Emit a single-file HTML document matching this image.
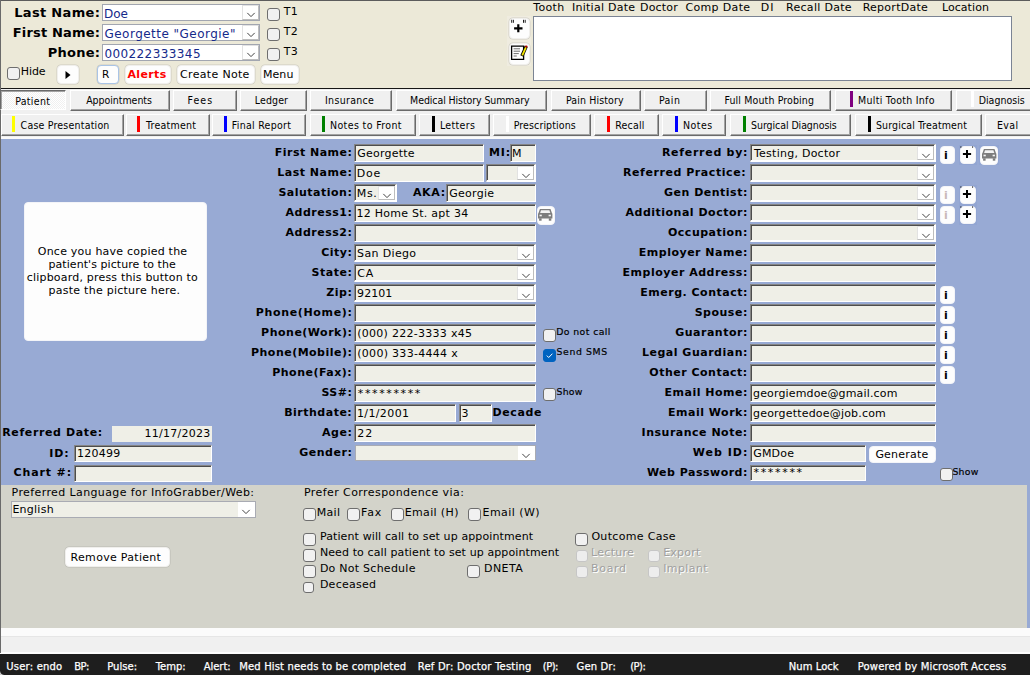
<!DOCTYPE html>
<html lang="en">
<head>
<meta charset="utf-8">
<title>Patient</title>
<style>
html,body{margin:0;padding:0}
body{width:1030px;height:675px;overflow:hidden;background:#f0f0f0;font-family:'DejaVu Sans','Liberation Sans',sans-serif;font-size:11.5px;color:#000}
#app{position:relative;width:1030px;height:675px;overflow:hidden}
#app div,#app span,#app svg{position:absolute;box-sizing:border-box}
.t{white-space:pre;line-height:1;font-family:'DejaVu Sans','Liberation Sans',sans-serif}
.c{font-family:'DejaVu Sans Condensed','Liberation Sans',sans-serif}
.f{background:#efefe7;border:1px solid;border-color:#858585 #fff #fff #858585;box-shadow:inset 1px 1px 0 #4d4d4d;overflow:hidden}
.cmb{border-right-width:2px;border-bottom-width:2px}
.flat{background:#efefe7;border:1px solid #a9abb3}
.ddf{background:#fff}
.ddf svg{left:3px;top:7px}
.hc{background:#fff;border:1px solid #a2a6b0;overflow:hidden}
.dd{background:#fff;border:1px solid;border-color:#e2e2e2 #bdbdbd #bdbdbd #e2e2e2}
.dd svg{left:3px;top:6px}
.cb{width:13px;height:13px;border:1px solid #6e6e6e;border-radius:3px;background:#f1f1f1}
.cbd{width:12px;height:12px;border:1px solid #c6c6c6;border-radius:3px;background:#ededed}
.cbs{width:11px;height:11px}
.cbk{background:#0063c0;border-color:#0063c0}
.b{background:#fdfdfd;border:1px solid #f0efec;border-radius:4px;box-shadow:0 0 0 0.5px rgba(120,120,120,.25)}
.bb{border-color:#f3f4f8;box-shadow:none}
.tab{background:#f0f0f0;border:1px solid;border-color:#fff #6a6a6a #6a6a6a #fff;box-shadow:inset -1px -1px 0 #a3a3a3}
.tabp{border-color:#6a6a6a #fff #fff #6a6a6a;box-shadow:inset 1px 1px 0 #a3a3a3;background:repeating-conic-gradient(#ffffff 0% 25%,#f0f0f0 0% 50%) 0 0/2px 2px}
.dis{color:#a0a0a0;text-shadow:1px 1px 0 #fff}
.sm{-webkit-text-stroke:0.18px #000}
.st{-webkit-text-stroke:0.25px #fff}
</style>
</head>
<body>
<div id="app">
<div style="left:0px;top:0px;width:1030px;height:88px;background:#ece9d8"></div>
<div style="left:0px;top:0px;width:1030px;height:1px;background:#5c5c5c"></div>
<div style="left:0px;top:88px;width:1030px;height:1px;background:#161616"></div>
<div style="left:0px;top:89px;width:1030px;height:50px;background:#f0f0f0"></div>
<div style="left:0px;top:137px;width:1030px;height:2px;background:#fafafa"></div>
<div style="left:0px;top:139px;width:1030px;height:489px;background:#98aad4"></div>
<div style="left:1px;top:485px;width:1026px;height:143px;background:#d3d3ca"></div>
<div style="left:0px;top:628px;width:1030px;height:8px;background:#fbfbfb"></div>
<div style="left:0px;top:636px;width:1030px;height:1px;background:#e6e6e6"></div>
<div style="left:0px;top:637px;width:1030px;height:15px;background:#f0f0f0"></div>
<div style="left:0px;top:652px;width:1030px;height:2px;background:#fdfdfd"></div>
<div style="left:0px;top:654px;width:1030px;height:21px;background:#1e1e1e"></div>
<div style="left:0px;top:0px;width:1px;height:653px;background:#6a6a6a"></div>
<div style="left:0px;top:671px;width:4px;height:4px;background:radial-gradient(circle at 100% 0,#1e1e1e 3.4px,#c8c8c8 4.2px)"></div>
<div class="hc" style="left:102px;top:4px;width:158px;height:17px;"></div>
<div style="left:102px;top:20px;width:158px;height:1px;background:#a2a6b0"></div>
<div style="left:102px;top:21px;width:158px;height:3px;background:#ece9d8"></div>
<div class="dd" style="left:242px;top:5px;width:17px;height:15px;"><svg width="10" height="6" viewBox="0 0 10 6"><path d="M1.3 0.9 L5 4.6 L8.7 0.9" fill="none" stroke="#444" stroke-width="1"/></svg></div>
<div class="cb" style="left:267px;top:8px;width:13px;height:13px;"></div>
<div class="hc" style="left:102px;top:24px;width:158px;height:17px;"></div>
<div style="left:102px;top:40px;width:158px;height:1px;background:#a2a6b0"></div>
<div style="left:102px;top:41px;width:158px;height:3px;background:#ece9d8"></div>
<div class="dd" style="left:242px;top:25px;width:17px;height:15px;"><svg width="10" height="6" viewBox="0 0 10 6"><path d="M1.3 0.9 L5 4.6 L8.7 0.9" fill="none" stroke="#444" stroke-width="1"/></svg></div>
<div class="cb" style="left:267px;top:28px;width:13px;height:13px;"></div>
<div class="hc" style="left:102px;top:44px;width:158px;height:17px;"></div>
<div style="left:102px;top:60px;width:158px;height:1px;background:#a2a6b0"></div>
<div style="left:102px;top:61px;width:158px;height:3px;background:#ece9d8"></div>
<div class="dd" style="left:242px;top:45px;width:17px;height:15px;"><svg width="10" height="6" viewBox="0 0 10 6"><path d="M1.3 0.9 L5 4.6 L8.7 0.9" fill="none" stroke="#444" stroke-width="1"/></svg></div>
<div class="cb" style="left:267px;top:48px;width:13px;height:13px;"></div>
<div class="cb" style="left:7px;top:67px;width:13px;height:13px;"></div>
<div class="b" style="left:56.5px;top:65px;width:22px;height:19px;"><svg width="6" height="8" viewBox="0 0 6 8" style="left:7px;top:5px"><path d="M0.5 0 L5.5 4 L0.5 8 Z" fill="#000"/></svg></div>
<div class="b" style="left:96.5px;top:65px;width:22px;height:19px;border-color:#a9c4e6"></div>
<div class="b" style="left:124.5px;top:65px;width:46px;height:19px;"></div>
<div class="b" style="left:177px;top:65px;width:77.5px;height:19px;"></div>
<div class="b" style="left:260.5px;top:65px;width:38px;height:19px;"></div>
<div style="left:533px;top:16px;width:479px;height:64.5px;background:#fff;border:1px solid #7b8494"></div>
<div style="left:507px;top:16px;width:24px;height:49.5px;background:#efece0"></div>
<div class="b" style="left:509px;top:17.5px;width:21px;height:21.5px;"></div>
<svg style="left:509px;top:17px" width="22" height="23" viewBox="509 17 22 23"><path d="M514.1 28.3h8.4M518.3 24.3v8" stroke="#000" stroke-width="2.2" fill="none"/><path d="M511.7 19.8v3M513.4 19.8v3M523.5 19.8v3M525.2 19.8v3" stroke="#000" stroke-width="0.9"/></svg>
<div class="b" style="left:509px;top:43px;width:21px;height:21.5px;"></div>
<svg style="left:509px;top:43px" width="22" height="22" viewBox="509 43 22 22"><path d="M511.6 46.2h12v13.2h-12z" fill="#fff" stroke="#000" stroke-width="1.3"/><path d="M513.6 48.8h6.4M513.6 51.2h6.4M513.6 53.6h5.2M513.6 56h3.2" stroke="#606060" stroke-width="0.9"/><path d="M526.2 46.4l-4.3 9.6" stroke="#000" stroke-width="3.4"/><path d="M525.9 47.4l-3.6 8" stroke="#f6e600" stroke-width="1.8"/><path d="M525.3 46l2 0.9" stroke="#b00000" stroke-width="1.8"/></svg>
<div class="tab tabp" style="left:0px;top:90px;width:66px;height:20px;"></div>
<div class="tab" style="left:70px;top:90px;width:100px;height:21px;"></div>
<div class="tab" style="left:173px;top:90px;width:64px;height:21px;"></div>
<div class="tab" style="left:240px;top:90px;width:66.5px;height:21px;"></div>
<div class="tab" style="left:310px;top:90px;width:81.5px;height:21px;"></div>
<div class="tab" style="left:395.5px;top:90px;width:151.5px;height:21px;"></div>
<div class="tab" style="left:551px;top:90px;width:89.5px;height:21px;"></div>
<div class="tab" style="left:644px;top:90px;width:63px;height:21px;"></div>
<div class="tab" style="left:710px;top:90px;width:121px;height:21px;"></div>
<div class="tab" style="left:834.5px;top:90px;width:117px;height:21px;"></div>
<div style="left:850px;top:91px;width:3.2px;height:16px;background:#800080"></div>
<div class="tab" style="left:955.5px;top:90px;width:84.5px;height:21px;"></div>
<div style="left:970.8px;top:91px;width:3.2px;height:16px;background:#fff"></div>
<div class="tab" style="left:1px;top:114px;width:123px;height:22px;"></div>
<div style="left:12px;top:116px;width:3.2px;height:16px;background:#ffff00"></div>
<div class="tab" style="left:126px;top:114px;width:84px;height:22px;"></div>
<div style="left:137px;top:116px;width:3.2px;height:16px;background:#ff0000"></div>
<div class="tab" style="left:212px;top:114px;width:94px;height:22px;"></div>
<div style="left:224px;top:116px;width:3.2px;height:16px;background:#0000ff"></div>
<div class="tab" style="left:310px;top:114px;width:106px;height:22px;"></div>
<div style="left:321.8px;top:116px;width:3.2px;height:16px;background:#008000"></div>
<div class="tab" style="left:419px;top:114px;width:71px;height:22px;"></div>
<div style="left:431.6px;top:116px;width:3.2px;height:16px;background:#000"></div>
<div class="tab" style="left:493px;top:114px;width:98px;height:22px;"></div>
<div style="left:506px;top:116px;width:3.2px;height:16px;background:#fff"></div>
<div class="tab" style="left:594px;top:114px;width:65px;height:22px;"></div>
<div style="left:607px;top:116px;width:3.2px;height:16px;background:#ff0000"></div>
<div class="tab" style="left:662px;top:114px;width:64px;height:22px;"></div>
<div style="left:675px;top:116px;width:3.2px;height:16px;background:#0000ff"></div>
<div class="tab" style="left:730px;top:114px;width:121px;height:22px;"></div>
<div style="left:742.6px;top:116px;width:3.2px;height:16px;background:#008000"></div>
<div class="tab" style="left:855px;top:114px;width:127px;height:22px;"></div>
<div style="left:867.6px;top:116px;width:3.2px;height:16px;background:#000"></div>
<div class="tab" style="left:985px;top:114px;width:55px;height:22px;"></div>
<div class="f" style="left:354px;top:144px;width:130px;height:18px;"></div>
<div class="f" style="left:510px;top:144px;width:26px;height:18px;"></div>
<div class="f" style="left:354px;top:164px;width:130px;height:18px;"></div>
<div class="f cmb" style="left:486px;top:164px;width:50px;height:18px;"></div>
<div class="dd" style="left:517px;top:166px;width:17px;height:14px;"><svg width="10" height="6" viewBox="0 0 10 6"><path d="M1.3 0.9 L5 4.6 L8.7 0.9" fill="none" stroke="#444" stroke-width="1"/></svg></div>
<div class="f cmb" style="left:354px;top:184px;width:43px;height:18px;"></div>
<div class="dd" style="left:378px;top:186px;width:17px;height:14px;"><svg width="10" height="6" viewBox="0 0 10 6"><path d="M1.3 0.9 L5 4.6 L8.7 0.9" fill="none" stroke="#444" stroke-width="1"/></svg></div>
<div class="f" style="left:446px;top:184px;width:90px;height:18px;"></div>
<div class="f" style="left:354px;top:204px;width:182px;height:18px;"></div>
<div class="f" style="left:354px;top:224px;width:182px;height:18px;"></div>
<div class="f cmb" style="left:354px;top:244px;width:182px;height:18px;"></div>
<div class="dd" style="left:517px;top:246px;width:17px;height:14px;"><svg width="10" height="6" viewBox="0 0 10 6"><path d="M1.3 0.9 L5 4.6 L8.7 0.9" fill="none" stroke="#444" stroke-width="1"/></svg></div>
<div class="f cmb" style="left:354px;top:264px;width:182px;height:18px;"></div>
<div class="dd" style="left:517px;top:266px;width:17px;height:14px;"><svg width="10" height="6" viewBox="0 0 10 6"><path d="M1.3 0.9 L5 4.6 L8.7 0.9" fill="none" stroke="#444" stroke-width="1"/></svg></div>
<div class="f cmb" style="left:354px;top:284px;width:182px;height:18px;"></div>
<div class="dd" style="left:517px;top:286px;width:17px;height:14px;"><svg width="10" height="6" viewBox="0 0 10 6"><path d="M1.3 0.9 L5 4.6 L8.7 0.9" fill="none" stroke="#444" stroke-width="1"/></svg></div>
<div class="f" style="left:354px;top:304px;width:182px;height:18px;"></div>
<div class="f" style="left:354px;top:324px;width:182px;height:18px;"></div>
<div class="f" style="left:354px;top:344px;width:182px;height:18px;"></div>
<div class="f" style="left:354px;top:364px;width:182px;height:18px;"></div>
<div class="f" style="left:354px;top:384px;width:182px;height:18px;"></div>
<div class="f" style="left:354px;top:404px;width:102px;height:18px;"></div>
<div class="f" style="left:458.5px;top:404px;width:33.5px;height:18px;"></div>
<div class="f" style="left:354px;top:424px;width:182px;height:18px;"></div>
<div class="flat" style="left:355px;top:445px;width:181px;height:16px;"></div>
<div class="ddf" style="left:518px;top:446px;width:17px;height:14px;"><svg width="10" height="6" viewBox="0 0 10 6"><path d="M1.3 0.9 L5 4.6 L8.7 0.9" fill="none" stroke="#444" stroke-width="1"/></svg></div>
<div class="b bb" style="left:536.5px;top:206px;width:18px;height:18.5px;"></div>
<svg style="left:536.6px;top:208px" width="17" height="14" viewBox="536.6 208 17 14"><g transform="translate(537.6 209)"><path d="M1.9 0h10.6l1.5 4.3q0.4 0.1 0.4 0.6v4.6h-14.4v-4.6q0-0.5 0.4-0.6z" fill="#7d7d7d"/><path d="M3 1.2h8.4l0.9 2.9h-10.2z" fill="#f4f4f4"/><rect x="1.1" y="9.3" width="2.5" height="2.4" fill="#7d7d7d"/><rect x="10.8" y="9.3" width="2.5" height="2.4" fill="#7d7d7d"/><rect x="1.5" y="5.7" width="2.3" height="1.6" fill="#f4f4f4"/><rect x="10.6" y="5.7" width="2.3" height="1.6" fill="#f4f4f4"/></g></svg>
<div class="cb" style="left:543px;top:329px;width:13px;height:13px;"></div>
<div class="cb cbk" style="left:543px;top:349px;width:13px;height:13px;"><svg width="11" height="11" viewBox="0 0 11 11" style="left:0;top:0"><path d="M2.8 5.6 L4.7 7.5 L8.4 3.7" fill="none" stroke="#fff" stroke-width="1"/></svg></div>
<div class="cb" style="left:543px;top:388px;width:13px;height:13px;"></div>
<div class="b bb" style="left:24px;top:202px;width:183px;height:138.5px;"></div>
<div style="left:112px;top:426px;width:100px;height:15.5px;background:#efefe7"></div>
<div class="f" style="left:74px;top:445px;width:138px;height:17px;"></div>
<div class="f" style="left:74px;top:465px;width:138px;height:17px;"></div>
<div class="f cmb" style="left:750px;top:144px;width:186px;height:18px;"></div>
<div class="dd" style="left:917px;top:146px;width:17px;height:14px;"><svg width="10" height="6" viewBox="0 0 10 6"><path d="M1.3 0.9 L5 4.6 L8.7 0.9" fill="none" stroke="#444" stroke-width="1"/></svg></div>
<div class="f cmb" style="left:750px;top:164px;width:186px;height:18px;"></div>
<div class="dd" style="left:917px;top:166px;width:17px;height:14px;"><svg width="10" height="6" viewBox="0 0 10 6"><path d="M1.3 0.9 L5 4.6 L8.7 0.9" fill="none" stroke="#444" stroke-width="1"/></svg></div>
<div class="f cmb" style="left:750px;top:184px;width:186px;height:18px;"></div>
<div class="dd" style="left:917px;top:186px;width:17px;height:14px;"><svg width="10" height="6" viewBox="0 0 10 6"><path d="M1.3 0.9 L5 4.6 L8.7 0.9" fill="none" stroke="#444" stroke-width="1"/></svg></div>
<div class="f cmb" style="left:750px;top:204px;width:186px;height:18px;"></div>
<div class="dd" style="left:917px;top:206px;width:17px;height:14px;"><svg width="10" height="6" viewBox="0 0 10 6"><path d="M1.3 0.9 L5 4.6 L8.7 0.9" fill="none" stroke="#444" stroke-width="1"/></svg></div>
<div class="f cmb" style="left:750px;top:224px;width:186px;height:18px;"></div>
<div class="dd" style="left:917px;top:226px;width:17px;height:14px;"><svg width="10" height="6" viewBox="0 0 10 6"><path d="M1.3 0.9 L5 4.6 L8.7 0.9" fill="none" stroke="#444" stroke-width="1"/></svg></div>
<div class="f" style="left:750px;top:244px;width:186px;height:18px;"></div>
<div class="f" style="left:750px;top:264px;width:186px;height:18px;"></div>
<div class="f" style="left:750px;top:284px;width:186px;height:18px;"></div>
<div class="f" style="left:750px;top:304px;width:186px;height:18px;"></div>
<div class="f" style="left:750px;top:324px;width:186px;height:18px;"></div>
<div class="f" style="left:750px;top:344px;width:186px;height:18px;"></div>
<div class="f" style="left:750px;top:364px;width:186px;height:18px;"></div>
<div class="f" style="left:750px;top:384px;width:186px;height:18px;"></div>
<div class="f" style="left:750px;top:404px;width:186px;height:18px;"></div>
<div class="f" style="left:750px;top:424px;width:186px;height:18px;"></div>
<div class="f" style="left:750px;top:445px;width:116px;height:17px;"></div>
<div class="f" style="left:750px;top:464.5px;width:116px;height:16.5px;"></div>
<div class="b bb" style="left:869px;top:445.5px;width:67px;height:17px;"></div>
<div class="cb" style="left:939.5px;top:468px;width:13px;height:13px;"></div>
<div class="b bb" style="left:940px;top:146px;width:14.5px;height:17.5px;"></div>
<div style="left:959px;top:145px;width:18px;height:20px;background:#92a5d2"></div>
<div class="b bb" style="left:959.5px;top:146px;width:16.5px;height:18px;"></div>
<svg style="left:958.3px;top:145px" width="18" height="18" viewBox="958.3 145 18 18"><path d="M963.2 154h8.2M967.3 149.9v8.2" stroke="#000" stroke-width="2" fill="none"/><path d="M961.2 146.4v1.3M972.9 146.4v1.3" stroke="#000" stroke-width="0.9"/></svg>
<div style="left:979px;top:145px;width:20px;height:20px;background:#92a5d2"></div>
<div class="b bb" style="left:980px;top:146px;width:18px;height:18.5px;"></div>
<svg style="left:980.6px;top:148px" width="17" height="14" viewBox="980.6 148 17 14"><g transform="translate(981.6 149)"><path d="M1.9 0h10.6l1.5 4.3q0.4 0.1 0.4 0.6v4.6h-14.4v-4.6q0-0.5 0.4-0.6z" fill="#7d7d7d"/><path d="M3 1.2h8.4l0.9 2.9h-10.2z" fill="#f4f4f4"/><rect x="1.1" y="9.3" width="2.5" height="2.4" fill="#7d7d7d"/><rect x="10.8" y="9.3" width="2.5" height="2.4" fill="#7d7d7d"/><rect x="1.5" y="5.7" width="2.3" height="1.6" fill="#f4f4f4"/><rect x="10.6" y="5.7" width="2.3" height="1.6" fill="#f4f4f4"/></g></svg>
<div class="b bb" style="left:940px;top:186px;width:14.5px;height:17.5px;"></div>
<div style="left:959px;top:185px;width:18px;height:20px;background:#92a5d2"></div>
<div class="b bb" style="left:959.5px;top:186px;width:16.5px;height:18px;"></div>
<svg style="left:958.3px;top:185px" width="18" height="18" viewBox="958.3 185 18 18"><path d="M963.2 194h8.2M967.3 189.9v8.2" stroke="#000" stroke-width="2" fill="none"/><path d="M961.2 186.4v1.3M972.9 186.4v1.3" stroke="#000" stroke-width="0.9"/></svg>
<div class="b bb" style="left:940px;top:206px;width:14.5px;height:17.5px;"></div>
<div style="left:959px;top:205px;width:18px;height:20px;background:#92a5d2"></div>
<div class="b bb" style="left:959.5px;top:206px;width:16.5px;height:18px;"></div>
<svg style="left:958.3px;top:205px" width="18" height="18" viewBox="958.3 205 18 18"><path d="M963.2 214h8.2M967.3 209.9v8.2" stroke="#000" stroke-width="2" fill="none"/><path d="M961.2 206.4v1.3M972.9 206.4v1.3" stroke="#000" stroke-width="0.9"/></svg>
<div class="b bb" style="left:940px;top:286px;width:14.5px;height:17.5px;"></div>
<div class="b bb" style="left:940px;top:306px;width:14.5px;height:17.5px;"></div>
<div class="b bb" style="left:940px;top:326px;width:14.5px;height:17.5px;"></div>
<div class="b bb" style="left:940px;top:346px;width:14.5px;height:17.5px;"></div>
<div class="b bb" style="left:940px;top:366px;width:14.5px;height:17.5px;"></div>
<div class="flat" style="left:11px;top:501px;width:245px;height:17px;"></div>
<div class="ddf" style="left:238px;top:502px;width:17px;height:15px;"><svg width="10" height="6" viewBox="0 0 10 6"><path d="M1.3 0.9 L5 4.6 L8.7 0.9" fill="none" stroke="#444" stroke-width="1"/></svg></div>
<div class="b" style="left:65px;top:547px;width:105px;height:19.5px;"></div>
<div class="cb" style="left:303px;top:508px;width:13px;height:13px;"></div>
<div class="cb" style="left:347px;top:508px;width:13px;height:13px;"></div>
<div class="cb" style="left:391px;top:508px;width:13px;height:13px;"></div>
<div class="cb" style="left:468px;top:508px;width:13px;height:13px;"></div>
<div class="cb" style="left:303px;top:533px;width:13px;height:13px;"></div>
<div class="cb" style="left:303px;top:549px;width:13px;height:13px;"></div>
<div class="cb" style="left:303px;top:565px;width:13px;height:13px;"></div>
<div class="cb cbs" style="left:303px;top:582px;width:11px;height:11px;"></div>
<div class="cb" style="left:467px;top:565px;width:13px;height:13px;"></div>
<div class="cb" style="left:575px;top:533px;width:13px;height:13px;"></div>
<div class="cbd" style="left:576px;top:549.5px;width:12px;height:12px;"></div>
<div class="cbd" style="left:647.5px;top:549.5px;width:12px;height:12px;"></div>
<div class="cbd" style="left:576px;top:565.5px;width:12px;height:12px;"></div>
<div class="cbd" style="left:647.5px;top:565.5px;width:12px;height:12px;"></div>
<span class="t" style="left:14.2px;top:6.4px;font-size:13px;letter-spacing:0.33px;font-weight:700;">Last Name:</span>
<span class="t" style="left:12.7px;top:26.4px;font-size:13px;letter-spacing:0.18px;font-weight:700;">First Name:</span>
<span class="t" style="left:47.7px;top:46.4px;font-size:13px;letter-spacing:0.25px;font-weight:700;">Phone:</span>
<span class="t" style="left:104.0px;top:8.4px;font-size:12px;color:#15298a;">Doe</span>
<span class="t" style="left:283.7px;top:6.2px;font-size:11px;letter-spacing:0.25px;">T1</span>
<span class="t" style="left:104.5px;top:28.4px;font-size:12px;letter-spacing:0.47px;color:#15298a;">Georgette &quot;Georgie&quot;</span>
<span class="t" style="left:283.7px;top:26.1px;font-size:11px;letter-spacing:0.25px;">T2</span>
<span class="t" style="left:104.4px;top:48.4px;font-size:12px;letter-spacing:0.41px;color:#15298a;">000222333345</span>
<span class="t" style="left:283.7px;top:46.1px;font-size:11px;letter-spacing:0.25px;">T3</span>
<span class="t" style="left:20.8px;top:66.2px;font-size:11px;letter-spacing:-0.10px;">Hide</span>
<span class="t" style="left:102.0px;top:69.0px;font-size:10.5px;letter-spacing:0.30px;">R</span>
<span class="t" style="left:127.5px;top:69.0px;font-size:11px;letter-spacing:0.36px;font-weight:700;color:#f00;">Alerts</span>
<span class="t" style="left:180.1px;top:68.6px;font-size:11px;letter-spacing:0.32px;">Create Note</span>
<span class="t" style="left:262.9px;top:68.6px;font-size:11px;letter-spacing:0.09px;">Menu</span>
<span class="t" style="left:533.2px;top:2.1px;font-size:11px;letter-spacing:0.37px;">Tooth</span>
<span class="t" style="left:571.9px;top:2.1px;font-size:11px;letter-spacing:0.27px;">Initial Date</span>
<span class="t" style="left:640.1px;top:2.1px;font-size:11px;letter-spacing:0.15px;">Doctor</span>
<span class="t" style="left:685.4px;top:2.1px;font-size:11px;letter-spacing:0.35px;">Comp Date</span>
<span class="t" style="left:760.8px;top:2.1px;font-size:11px;letter-spacing:0.90px;">DI</span>
<span class="t" style="left:786.0px;top:2.1px;font-size:11px;letter-spacing:0.30px;">Recall Date</span>
<span class="t" style="left:862.7px;top:2.1px;font-size:11px;letter-spacing:0.26px;">ReportDate</span>
<span class="t" style="left:941.9px;top:2.1px;font-size:11px;letter-spacing:0.07px;">Location</span>
<span class="t c" style="left:15.2px;top:95.8px;font-size:10.5px;letter-spacing:0.32px;">Patient</span>
<span class="t c" style="left:86.2px;top:95.0px;font-size:10.5px;letter-spacing:-0.04px;">Appointments</span>
<span class="t c" style="left:187.5px;top:95.0px;font-size:10.5px;letter-spacing:1.05px;">Fees</span>
<span class="t c" style="left:254.8px;top:95.0px;font-size:10.5px;letter-spacing:0.12px;">Ledger</span>
<span class="t c" style="left:325.0px;top:95.0px;font-size:10.5px;letter-spacing:0.32px;">Insurance</span>
<span class="t c" style="left:410.1px;top:95.0px;font-size:10.5px;letter-spacing:-0.09px;">Medical History Summary</span>
<span class="t c" style="left:566.0px;top:95.0px;font-size:10.5px;letter-spacing:0.12px;">Pain History</span>
<span class="t c" style="left:658.9px;top:95.0px;font-size:10.5px;letter-spacing:0.46px;">Pain</span>
<span class="t c" style="left:724.5px;top:95.0px;font-size:10.5px;letter-spacing:0.13px;">Full Mouth Probing</span>
<span class="t c" style="left:858.1px;top:95.0px;font-size:10.5px;letter-spacing:0.28px;">Multi Tooth Info</span>
<span class="t c" style="left:978.7px;top:95.0px;font-size:10.5px;letter-spacing:0.01px;">Diagnosis</span>
<span class="t c" style="left:20.6px;top:119.5px;font-size:10.5px;letter-spacing:0.21px;">Case Presentation</span>
<span class="t c" style="left:146.1px;top:119.5px;font-size:10.5px;letter-spacing:0.24px;">Treatment</span>
<span class="t c" style="left:231.8px;top:119.5px;font-size:10.5px;letter-spacing:0.28px;">Final Report</span>
<span class="t c" style="left:330.0px;top:119.5px;font-size:10.5px;letter-spacing:0.38px;">Notes to Front</span>
<span class="t c" style="left:439.9px;top:119.5px;font-size:10.5px;letter-spacing:0.34px;">Letters</span>
<span class="t c" style="left:513.7px;top:119.5px;font-size:10.5px;letter-spacing:0.12px;">Prescriptions</span>
<span class="t c" style="left:615.2px;top:119.5px;font-size:10.5px;letter-spacing:0.21px;">Recall</span>
<span class="t c" style="left:682.9px;top:119.5px;font-size:10.5px;letter-spacing:0.50px;">Notes</span>
<span class="t c" style="left:751.1px;top:119.5px;font-size:10.5px;letter-spacing:-0.07px;">Surgical Diagnosis</span>
<span class="t c" style="left:876.0px;top:119.5px;font-size:10.5px;letter-spacing:0.12px;">Surgical Treatment</span>
<span class="t c" style="left:996.9px;top:119.5px;font-size:10.5px;letter-spacing:0.41px;">Eval</span>
<span class="t" style="left:274.8px;top:147.4px;font-size:11px;letter-spacing:0.47px;font-weight:700;">First Name:</span>
<span class="t" style="left:277.3px;top:167.4px;font-size:11px;letter-spacing:0.50px;font-weight:700;">Last Name:</span>
<span class="t" style="left:278.4px;top:187.4px;font-size:11px;letter-spacing:0.50px;font-weight:700;">Salutation:</span>
<span class="t" style="left:285.5px;top:207.4px;font-size:11px;letter-spacing:0.50px;font-weight:700;">Address1:</span>
<span class="t" style="left:285.5px;top:227.4px;font-size:11px;letter-spacing:0.50px;font-weight:700;">Address2:</span>
<span class="t" style="left:321.2px;top:247.4px;font-size:11px;letter-spacing:0.50px;font-weight:700;">City:</span>
<span class="t" style="left:311.6px;top:267.4px;font-size:11px;letter-spacing:0.50px;font-weight:700;">State:</span>
<span class="t" style="left:326.3px;top:287.4px;font-size:11px;letter-spacing:0.50px;font-weight:700;">Zip:</span>
<span class="t" style="left:255.8px;top:307.4px;font-size:11px;letter-spacing:0.65px;font-weight:700;">Phone(Home):</span>
<span class="t" style="left:261.1px;top:327.4px;font-size:11px;letter-spacing:0.50px;font-weight:700;">Phone(Work):</span>
<span class="t" style="left:251.0px;top:347.4px;font-size:11px;letter-spacing:0.48px;font-weight:700;">Phone(Mobile):</span>
<span class="t" style="left:272.2px;top:367.4px;font-size:11px;letter-spacing:0.50px;font-weight:700;">Phone(Fax):</span>
<span class="t" style="left:321.4px;top:387.4px;font-size:11px;letter-spacing:0.50px;font-weight:700;">SS#:</span>
<span class="t" style="left:284.2px;top:407.4px;font-size:11px;letter-spacing:0.50px;font-weight:700;">Birthdate:</span>
<span class="t" style="left:322.1px;top:427.4px;font-size:11px;letter-spacing:0.50px;font-weight:700;">Age:</span>
<span class="t" style="left:299.3px;top:447.4px;font-size:11px;letter-spacing:0.50px;font-weight:700;">Gender:</span>
<span class="t" style="left:357.2px;top:148.2px;font-size:11px;letter-spacing:0.23px;">Georgette</span>
<span class="t" style="left:488.9px;top:147.4px;font-size:11px;letter-spacing:0.90px;font-weight:700;">MI:</span>
<span class="t" style="left:511.9px;top:148.2px;font-size:11px;letter-spacing:0.25px;">M</span>
<span class="t" style="left:356.7px;top:168.2px;font-size:11px;letter-spacing:0.85px;">Doe</span>
<span class="t" style="left:356.7px;top:188.2px;font-size:11px;letter-spacing:0.72px;">Ms.</span>
<span class="t" style="left:412.9px;top:187.4px;font-size:11px;letter-spacing:0.71px;font-weight:700;">AKA:</span>
<span class="t" style="left:449.2px;top:188.2px;font-size:11px;letter-spacing:0.29px;">Georgie</span>
<span class="t" style="left:356.6px;top:208.2px;font-size:11px;letter-spacing:0.25px;">12 Home St. apt 34</span>
<span class="t" style="left:357.1px;top:248.2px;font-size:11px;letter-spacing:0.35px;">San Diego</span>
<span class="t" style="left:357.2px;top:268.2px;font-size:11px;letter-spacing:0.90px;">CA</span>
<span class="t" style="left:357.1px;top:288.2px;font-size:11px;letter-spacing:0.05px;">92101</span>
<span class="t" style="left:357.2px;top:328.2px;font-size:11px;letter-spacing:0.28px;">(000) 222-3333 x45</span>
<span class="t" style="left:357.2px;top:348.2px;font-size:11px;letter-spacing:0.30px;">(000) 333-4444 x</span>
<span class="t" style="left:357.8px;top:388.2px;font-size:11px;letter-spacing:1.63px;">*********</span>
<span class="t" style="left:356.9px;top:408.2px;font-size:11px;letter-spacing:0.39px;">1/1/2001</span>
<span class="t" style="left:461.4px;top:408.2px;font-size:11px;letter-spacing:0.25px;">3</span>
<span class="t" style="left:492.6px;top:407.0px;font-size:11px;letter-spacing:0.59px;font-weight:700;">Decade</span>
<span class="t" style="left:357.3px;top:428.2px;font-size:11px;letter-spacing:0.90px;">22</span>
<span class="t sm" style="left:556.2px;top:327.4px;font-size:9.3px;letter-spacing:0.43px;">Do not call</span>
<span class="t sm" style="left:556.5px;top:347.3px;font-size:9.3px;letter-spacing:0.63px;">Send SMS</span>
<span class="t sm" style="left:556.5px;top:387.3px;font-size:9.3px;letter-spacing:0.24px;">Show</span>
<span class="t" style="left:37.8px;top:246.1px;font-size:11px;letter-spacing:0.22px;">Once you have copied the</span>
<span class="t" style="left:48.5px;top:259.1px;font-size:11px;letter-spacing:0.06px;">patient&#x27;s picture to the</span>
<span class="t" style="left:26.8px;top:272.2px;font-size:11px;letter-spacing:0.19px;">clipboard, press this button to</span>
<span class="t" style="left:48.5px;top:285.2px;font-size:11px;letter-spacing:0.26px;">paste the picture here.</span>
<span class="t" style="left:2.2px;top:427.4px;font-size:11px;letter-spacing:0.63px;font-weight:700;">Referred Date:</span>
<span class="t" style="left:144.5px;top:428.2px;font-size:11px;letter-spacing:0.25px;">11/17/2023</span>
<span class="t" style="left:49.3px;top:447.6px;font-size:11px;letter-spacing:0.90px;font-weight:700;">ID:</span>
<span class="t" style="left:76.9px;top:448.2px;font-size:11px;letter-spacing:0.25px;">120499</span>
<span class="t" style="left:13.5px;top:467.2px;font-size:11px;letter-spacing:0.87px;font-weight:700;">Chart #:</span>
<span class="t" style="left:661.9px;top:147.4px;font-size:11px;letter-spacing:0.72px;font-weight:700;">Referred by:</span>
<span class="t" style="left:623.0px;top:167.4px;font-size:11px;letter-spacing:0.56px;font-weight:700;">Referred Practice:</span>
<span class="t" style="left:664.0px;top:187.4px;font-size:11px;letter-spacing:0.50px;font-weight:700;">Gen Dentist:</span>
<span class="t" style="left:625.5px;top:207.4px;font-size:11px;letter-spacing:0.50px;font-weight:700;">Additional Doctor:</span>
<span class="t" style="left:668.0px;top:227.4px;font-size:11px;letter-spacing:0.50px;font-weight:700;">Occupation:</span>
<span class="t" style="left:638.8px;top:247.4px;font-size:11px;letter-spacing:0.50px;font-weight:700;">Employer Name:</span>
<span class="t" style="left:622.6px;top:267.4px;font-size:11px;letter-spacing:0.50px;font-weight:700;">Employer Address:</span>
<span class="t" style="left:640.3px;top:287.4px;font-size:11px;letter-spacing:0.50px;font-weight:700;">Emerg. Contact:</span>
<span class="t" style="left:694.7px;top:307.4px;font-size:11px;letter-spacing:0.50px;font-weight:700;">Spouse:</span>
<span class="t" style="left:675.2px;top:327.4px;font-size:11px;letter-spacing:0.50px;font-weight:700;">Guarantor:</span>
<span class="t" style="left:642.0px;top:347.4px;font-size:11px;letter-spacing:0.50px;font-weight:700;">Legal Guardian:</span>
<span class="t" style="left:649.3px;top:367.4px;font-size:11px;letter-spacing:0.50px;font-weight:700;">Other Contact:</span>
<span class="t" style="left:664.5px;top:387.4px;font-size:11px;letter-spacing:0.50px;font-weight:700;">Email Home:</span>
<span class="t" style="left:668.1px;top:407.4px;font-size:11px;letter-spacing:0.50px;font-weight:700;">Email Work:</span>
<span class="t" style="left:641.6px;top:427.4px;font-size:11px;letter-spacing:0.50px;font-weight:700;">Insurance Note:</span>
<span class="t" style="left:692.8px;top:447.4px;font-size:11px;letter-spacing:1.00px;font-weight:700;">Web ID:</span>
<span class="t" style="left:646.9px;top:467.4px;font-size:11px;letter-spacing:0.49px;font-weight:700;">Web Password:</span>
<span class="t" style="left:754.0px;top:148.2px;font-size:11px;letter-spacing:0.25px;">Testing, Doctor</span>
<span class="t" style="left:753.0px;top:388.2px;font-size:11px;letter-spacing:0.15px;">georgiemdoe@gmail.com</span>
<span class="t" style="left:753.0px;top:408.2px;font-size:11px;letter-spacing:0.19px;">georgettedoe@job.com</span>
<span class="t" style="left:753.2px;top:448.2px;font-size:11px;letter-spacing:0.20px;">GMDoe</span>
<span class="t" style="left:753.5px;top:467.4px;font-size:11px;letter-spacing:1.68px;">*******</span>
<span class="t" style="left:875.4px;top:449.2px;font-size:11px;letter-spacing:0.20px;">Generate</span>
<span class="t sm" style="left:952.4px;top:467.3px;font-size:9.3px;letter-spacing:0.30px;">Show</span>
<span class="t" style="left:944.1px;top:149.6px;font-size:11px;letter-spacing:0.50px;font-weight:700;">i</span>
<span class="t" style="left:944.1px;top:189.6px;font-size:11px;letter-spacing:0.50px;font-weight:700;color:#c9b8b8;">i</span>
<span class="t" style="left:944.1px;top:209.6px;font-size:11px;letter-spacing:0.50px;font-weight:700;color:#c9b8b8;">i</span>
<span class="t" style="left:944.1px;top:289.6px;font-size:11px;letter-spacing:0.50px;font-weight:700;">i</span>
<span class="t" style="left:944.1px;top:309.6px;font-size:11px;letter-spacing:0.50px;font-weight:700;">i</span>
<span class="t" style="left:944.1px;top:329.6px;font-size:11px;letter-spacing:0.50px;font-weight:700;">i</span>
<span class="t" style="left:944.1px;top:349.6px;font-size:11px;letter-spacing:0.50px;font-weight:700;">i</span>
<span class="t" style="left:944.1px;top:369.6px;font-size:11px;letter-spacing:0.50px;font-weight:700;">i</span>
<span class="t" style="left:11.6px;top:487.3px;font-size:11px;letter-spacing:0.39px;">Preferred Language for InfoGrabber/Web:</span>
<span class="t" style="left:12.4px;top:504.4px;font-size:11px;letter-spacing:0.25px;">English</span>
<span class="t" style="left:70.6px;top:551.6px;font-size:11px;letter-spacing:0.30px;">Remove Patient</span>
<span class="t" style="left:304.0px;top:487.2px;font-size:11px;letter-spacing:0.42px;">Prefer Correspondence via:</span>
<span class="t" style="left:316.8px;top:507.3px;font-size:11px;letter-spacing:0.29px;">Mail</span>
<span class="t" style="left:361.1px;top:507.3px;font-size:11px;letter-spacing:0.83px;">Fax</span>
<span class="t" style="left:404.7px;top:507.3px;font-size:11px;letter-spacing:0.36px;">Email (H)</span>
<span class="t" style="left:482.6px;top:507.3px;font-size:11px;letter-spacing:0.43px;">Email (W)</span>
<span class="t" style="left:319.9px;top:531.1px;font-size:11px;letter-spacing:0.12px;">Patient will call to set up appointment</span>
<span class="t" style="left:319.9px;top:547.0px;font-size:11px;letter-spacing:0.11px;">Need to call patient to set up appointment</span>
<span class="t" style="left:319.9px;top:563.0px;font-size:11px;letter-spacing:0.25px;">Do Not Schedule</span>
<span class="t" style="left:319.9px;top:579.2px;font-size:11px;letter-spacing:0.26px;">Deceased</span>
<span class="t" style="left:484.1px;top:563.0px;font-size:11px;letter-spacing:0.41px;">DNETA</span>
<span class="t" style="left:591.4px;top:531.3px;font-size:11px;letter-spacing:0.32px;">Outcome Case</span>
<span class="t dis" style="left:591.1px;top:547.0px;font-size:11px;letter-spacing:0.28px;">Lecture</span>
<span class="t dis" style="left:663.2px;top:547.0px;font-size:11px;letter-spacing:0.21px;">Export</span>
<span class="t dis" style="left:591.1px;top:563.3px;font-size:11px;letter-spacing:0.63px;">Board</span>
<span class="t dis" style="left:663.2px;top:563.3px;font-size:11px;letter-spacing:0.39px;">Implant</span>
<span class="t st" style="left:6.3px;top:661.9px;font-size:10px;letter-spacing:0.20px;color:#fff;">User: endo</span>
<span class="t st" style="left:74.2px;top:661.9px;font-size:10px;letter-spacing:-0.51px;color:#fff;">BP:</span>
<span class="t st" style="left:107.2px;top:661.9px;font-size:10px;letter-spacing:0.05px;color:#fff;">Pulse:</span>
<span class="t st" style="left:155.7px;top:661.9px;font-size:10px;letter-spacing:-0.02px;color:#fff;">Temp:</span>
<span class="t st" style="left:203.7px;top:661.9px;font-size:10px;letter-spacing:-0.03px;color:#fff;">Alert:</span>
<span class="t st" style="left:239.2px;top:661.9px;font-size:10px;letter-spacing:0.16px;color:#fff;">Med Hist needs to be completed</span>
<span class="t st" style="left:417.8px;top:661.9px;font-size:10px;letter-spacing:0.20px;color:#fff;">Ref Dr: Doctor Testing</span>
<span class="t st" style="left:542.8px;top:661.9px;font-size:10px;letter-spacing:-0.53px;color:#fff;">(P):</span>
<span class="t st" style="left:576.6px;top:661.9px;font-size:10px;letter-spacing:0.13px;color:#fff;">Gen Dr:</span>
<span class="t st" style="left:630.2px;top:661.9px;font-size:10px;letter-spacing:-0.53px;color:#fff;">(P):</span>
<span class="t st" style="left:788.8px;top:661.9px;font-size:10px;letter-spacing:0.04px;color:#fff;">Num Lock</span>
<span class="t st" style="left:857.7px;top:661.9px;font-size:10px;letter-spacing:0.17px;color:#fff;">Powered by Microsoft Access</span>
</div>
</body>
</html>
